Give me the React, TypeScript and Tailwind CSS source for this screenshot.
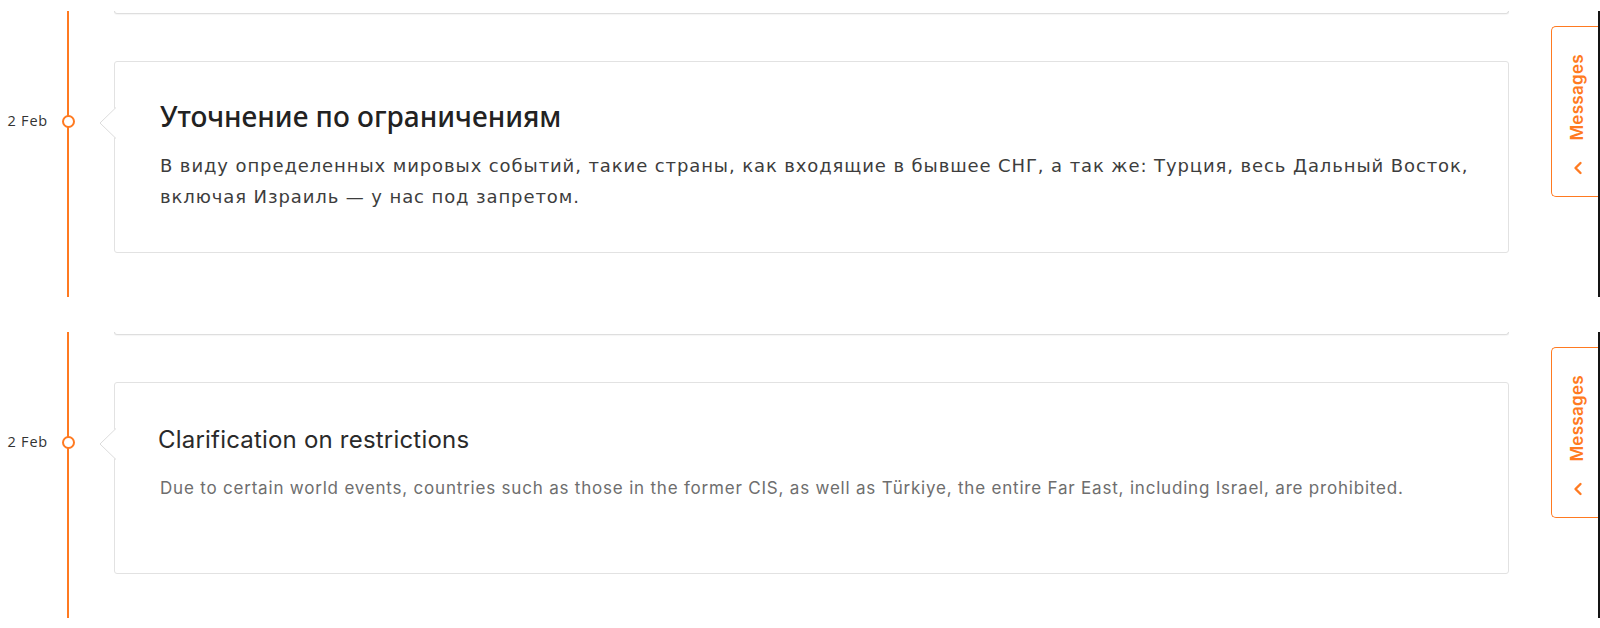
import React from 'react';

// --- Conteúdo dos dois blocos da linha do tempo ---
type Variant = 'ru' | 'en';

const notes: { variant: Variant; date: string; title: string; body: string }[] = [
  {
    variant: 'ru',
    date: '2 Feb',
    title: 'Уточнение по ограничениям',
    body: 'В виду определенных мировых событий, такие страны, как входящие в бывшее СНГ, а так же: Турция, весь Дальный Восток, включая Израиль — у нас под запретом.',
  },
  {
    variant: 'en',
    date: '2 Feb',
    title: 'Clarification on restrictions',
    body: 'Due to certain world events, countries such as those in the former CIS, as well as Türkiye, the entire Far East, including Israel, are prohibited.',
  },
];

function CardArrow() {
  // ponteiro do cartão apontando para o marcador da timeline
  return (
    <svg className="absolute left-[-16px] top-[45px]" width="17" height="32" viewBox="0 0 17 32">
      <polygon points="17,0 1,16 17,32" fill="#ffffff" />
      <polyline points="17,0.5 1,16 17,31.5" fill="none" stroke="#dcdcdc" strokeWidth="1" />
    </svg>
  );
}

function MessagesTab() {
  return (
    <div className="mt-[15px] h-[171px] w-[47px] shrink-0 rounded-l-[5px] border border-r-0 border-[#ff7a21] bg-white flex flex-col items-center pt-[27px]">
      <span
        className="[writing-mode:vertical-rl] rotate-180 text-[17px] font-semibold leading-none tracking-[0.3px] text-[#ff7a21] ml-[5px]"
        style={{ fontFamily: 'Inter, "Noto Sans", sans-serif' }}
      >
        Messages
      </span>
      <svg className="mt-[20px] ml-[5px]" width="10" height="14" viewBox="0 0 10 14">
        <polyline points="7.5,2 2.5,7 7.5,12" fill="none" stroke="#ff7a21" strokeWidth="2.4" strokeLinecap="round" strokeLinejoin="round" />
      </svg>
    </div>
  );
}

function TimelineSection({ note }: { note: (typeof notes)[number] }) {
  const ru = note.variant === 'ru';

  return (
    <div className="relative h-[286px] flex overflow-hidden">
      {/* trilho da timeline */}
      <div className="relative w-[114px] shrink-0">
        <div className="ml-[67px] w-[2px] h-full bg-[#ff7a21]" />
        <span
          className="absolute right-[66px] top-[101px] text-[14.5px] leading-[18px] tracking-[0.8px] text-[#333333]"
          style={{ fontFamily: '"Open Sans", sans-serif' }}
        >
          {note.date}
        </span>
        <div className="absolute left-[62px] top-[104px] w-[13px] h-[13px] rounded-full border-2 border-[#ff7a21] bg-white" />
      </div>

      {/* coluna dos cartões */}
      <div className="w-[1395px] shrink-0">
        <div className="h-[3px] rounded-b-[4px] border-x border-b border-[#dedede] shadow-[0_1px_1px_rgba(0,0,0,0.04)]" />
        <div className="relative mt-[47px] h-[192px] rounded-[3px] border border-[#e2e2e2] bg-white pl-[45px] pr-[10px]">
          <CardArrow />
          {ru ? (
            <div>
              <h2
                className="pt-[36px] text-[28px] leading-[36px] font-medium text-[#222222]"
                style={{ fontFamily: '"Noto Sans", sans-serif' }}
              >
                {note.title}
              </h2>
              <p
                className="mt-[16px] text-[18px] leading-[31px] tracking-[0.9px] text-[#3d3d3d] max-w-[1330px]"
                style={{ fontFamily: '"DejaVu Sans", sans-serif' }}
              >
                {note.body}
              </p>
            </div>
          ) : (
            <div style={{ fontFamily: 'Inter, sans-serif' }}>
              <h2 className="pt-[42px] text-[24px] leading-[30px] tracking-[0.2px] font-normal text-[#2a2a2a] -ml-[2px]">{note.title}</h2>
              <p className="mt-[21px] text-[17px] leading-[24px] tracking-[0.8px] text-[#6e6e6e]">{note.body}</p>
            </div>
          )}
        </div>
      </div>

      {/* aba lateral de mensagens + borda escura */}
      <div className="flex-1 flex justify-end">
        <MessagesTab />
        <div className="w-[2px] h-full bg-[#141414]" />
      </div>
    </div>
  );
}

export default function App() {
  return (
    <div className="w-[1600px] h-[628px] bg-white overflow-hidden pt-[11px] flex flex-col gap-[35px]">
      {notes.map((n, i) => (
        <TimelineSection key={i} note={n} />
      ))}
    </div>
  );
}
